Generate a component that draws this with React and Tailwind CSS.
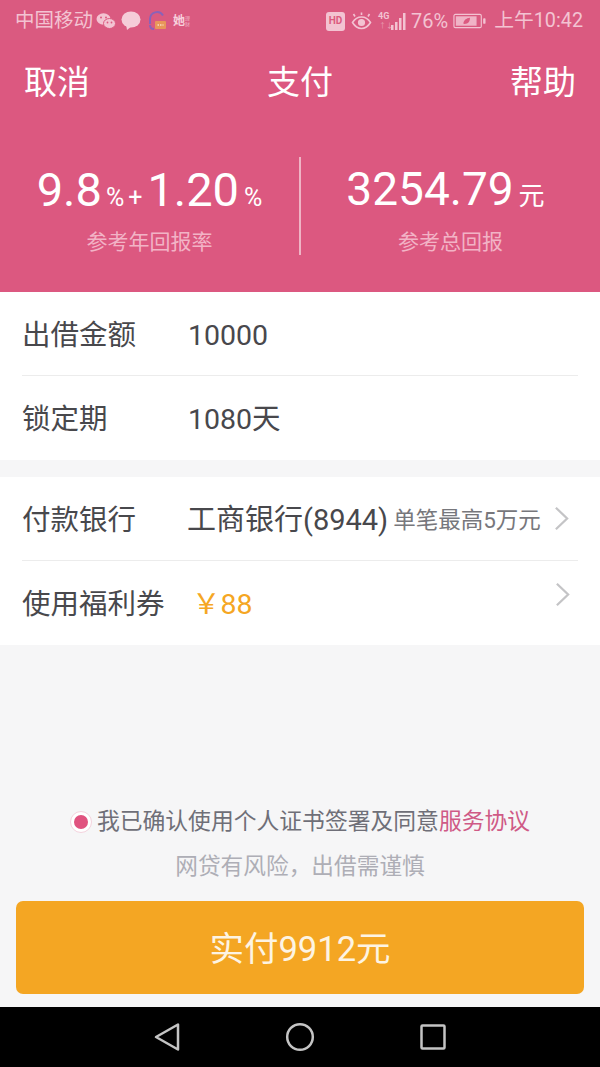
import React from "react";

const FONT = "font-['Roboto','Noto_Sans_CJK_SC',sans-serif]";

// Small status bar glyphs
const WechatIcon = () => (
  <svg width="20" height="18" viewBox="0 0 20 18" fill="#f3c3d2">
    <ellipse cx="7.5" cy="7" rx="7" ry="5.8" />
    <ellipse cx="13.5" cy="11.5" rx="6" ry="5" stroke="#dc5a80" strokeWidth="1" />
    <circle cx="5" cy="5.5" r="1" fill="#dc5a80" />
    <circle cx="10" cy="5.5" r="1" fill="#dc5a80" />
    <circle cx="11.5" cy="10.5" r="0.9" fill="#dc5a80" />
    <circle cx="15.5" cy="10.5" r="0.9" fill="#dc5a80" />
  </svg>
);

const ChatIcon = () => (
  <svg width="20" height="20" viewBox="0 0 20 20" fill="#f5ccd8">
    <ellipse cx="10" cy="8.5" rx="9.5" ry="8" />
    <path d="M5 13l1 6 5-4z" />
  </svg>
);

const HeadsetIcon = () => (
  <svg width="20" height="22" viewBox="0 0 20 22" fill="none">
    <path d="M2 14V9a7 7 0 0 1 13-3.500" stroke="#8a62b8" strokeWidth="2" />
    <path d="M2 15c0 3 1 4 4 4" stroke="#8a62b8" strokeWidth="2" />
    <rect x="7" y="11" width="11" height="8" rx="1" fill="#e8965a" />
    <path d="M9.500 15h6" stroke="#f9dcc0" strokeWidth="1.500" strokeDasharray="1.500 1" />
  </svg>
);

const HdIcon = () => (
  <span className="flex h-[19px] w-[19px] items-center justify-center rounded-[3px] bg-[#f3c3d2] text-[10px] font-bold leading-none text-[#dc5a80]">
    HD
  </span>
);

const EyeIcon = () => (
  <svg width="21" height="19" viewBox="0 0 21 19" fill="none" stroke="#f3c3d2" strokeWidth="1.600">
    <path d="M1.500 10.500C4 6.500 7 5 10.500 5s6.500 1.500 9 5.500c-2.500 4-5.500 6-9 6s-6.500-2-9-6z" />
    <circle cx="10.500" cy="10.500" r="2.800" fill="#f3c3d2" />
    <path d="M4 4.500L2.500 2M10.500 3V.5M17 4.500L18.500 2" />
  </svg>
);

const SignalIcon = () => (
  <span className="relative block h-[20px] w-[30px]">
    <span className="absolute left-0 top-0 text-[9px] font-bold leading-[10px] text-[#f3c3d2]">4G</span>
    <span className="absolute left-[1px] top-[11px] text-[7px] leading-[8px] text-[#eaa0b6]">↑↓</span>
    <svg className="absolute left-0 top-0" width="30" height="20" viewBox="0 0 30 20" fill="#f3c3d2">
      <rect x="13" y="14" width="2.500" height="5" />
      <rect x="17" y="11" width="2.500" height="8" />
      <rect x="21" y="7" width="2.500" height="12" />
      <rect x="25" y="2" width="2.500" height="17" />
    </svg>
  </span>
);

const BatteryIcon = () => (
  <svg width="33" height="18" viewBox="0 0 35 18" fill="none">
    <rect x="1" y="2" width="29" height="14" rx="1.500" stroke="#f3c3d2" strokeWidth="1.200" />
    <rect x="3" y="4" width="22" height="10" fill="#f0b3c6" />
    <path d="M11 12c0-4 3-6 7-6.500 0 4-2 7-7 6.500z" fill="#dc5a80" />
    <rect x="32" y="6" width="2.500" height="6" rx="1" fill="#f3c3d2" />
  </svg>
);

const Chevron = () => (
  <svg width="15" height="25" viewBox="0 0 16 26" fill="none" stroke="#c4c4c6" strokeWidth="2.400">
    <path d="M2 1.500L14 13 2 24.500" />
  </svg>
);

const Row = ({ label, last, children }) => (
  <div className="pl-[22px]">
    <div className={`flex h-[84px] items-center pt-[5px] ${last ? "" : "border-b border-[#ececec] mr-[22px]"}`}>
      <span className="w-[166px] text-[28.5px] text-[#48484c]">{label}</span>
      {children}
    </div>
  </div>
);

export default function App() {
  return (
    <div className={`${FONT} flex h-[1067px] w-[600px] flex-col overflow-hidden bg-[#f6f6f7]`}>
      {/* pink header */}
      <div className="flex h-[292px] flex-col bg-[#dc5880]">
        <div className="flex h-[40px] items-center justify-between bg-[#da5a80] pl-[15px] pr-[17px] pt-[2px] text-[#f3c3d2]">
          <div className="flex items-center">
            <span className="text-[19.500px] leading-none">中国移动</span>
            <span className="ml-[3px]"><WechatIcon /></span>
            <span className="ml-[5px]"><ChatIcon /></span>
            <span className="ml-[7px]"><HeadsetIcon /></span>
            <span className="ml-[5px] text-[12px] font-bold leading-none text-[#f7d0dc]">她</span>
            <span className="w-[6px] text-[5px] leading-[6px] text-[#f0b3c6]">理财</span>
          </div>
          <div className="flex items-center">
            <HdIcon />
            <span className="ml-[6px]"><EyeIcon /></span>
            <span className="ml-[6px]"><SignalIcon /></span>
            <span className="ml-[3px] text-[20px] leading-none">76%</span>
            <span className="ml-[5px]"><BatteryIcon /></span>
            <span className="ml-[8px] text-[19.800px] leading-none">上午10:42</span>
          </div>
        </div>

        <div className="flex h-[84px] items-center justify-between pl-[24px] pr-[24px] text-[33px] leading-none text-white">
          <span>取消</span>
          <span>支付</span>
          <span>帮助</span>
        </div>

        <div className="mt-[33px] flex">
          <div className="flex h-[100px] w-[299px] flex-col items-center text-white">
            <div className="flex h-[64px] items-baseline pt-[9px] leading-none">
              <span className="text-[47px]">9.8</span>
              <span className="ml-[4px] text-[25px]">%</span>
              <span className="ml-[4px] text-[25px]">+</span>
              <span className="ml-[5px] text-[47px]">1.20</span>
              <span className="ml-[5px] text-[25px]">%</span>
            </div>
            <span className="mt-[11px] text-[21px] leading-none text-[#f2b3c6]">参考年回报率</span>
          </div>
          <div className="h-[98px] w-[2px] bg-[#efb4c5]" />
          <div className="flex h-[100px] flex-1 flex-col items-center text-white">
            <div className="mr-[10px] flex h-[64px] items-baseline pt-[9px] leading-none">
              <span className="text-[46px]">3254.79</span>
              <span className="ml-[5px] text-[26px]">元</span>
            </div>
            <span className="mt-[11px] text-[21px] leading-none text-[#f2b3c6]">参考总回报</span>
          </div>
        </div>
      </div>

      {/* amount */}
      <div className="bg-white">
        <Row label="出借金额">
          <span className="text-[28.5px] text-[#48484c]">10000</span>
        </Row>
        <Row label="锁定期" last>
          <span className="text-[28.5px] text-[#48484c]">1080天</span>
        </Row>
      </div>

      {/* bank + coupon */}
      <div className="mt-[17px] bg-white">
        <Row label="付款银行">
          <span className="ml-[-1px] whitespace-nowrap text-[29px] text-[#48484c]">工商银行(8944)</span>
          <span className="ml-[5px] whitespace-nowrap text-[22.500px] text-[#77777c]">单笔最高5万元</span>
          <span className="ml-[13px] mt-[-6px] shrink-0"><Chevron /></span>
        </Row>
        <Row label="使用福利券" last>
          <span className="ml-[4px] text-[28.5px] text-[#f5a623]">￥88</span>
          <span className="ml-auto mr-[30px] mt-[-22px]"><Chevron /></span>
        </Row>
      </div>

      {/* agreement */}
      <div className="mt-[162px] flex items-center justify-center">
        <span className="flex h-[22px] w-[22px] items-center justify-center rounded-full border border-[#f4d3de] bg-white">
          <span className="h-[14px] w-[14px] rounded-full bg-[#e0527f]" />
        </span>
        <span className="ml-[5px] text-[22.800px] leading-[30px] text-[#6f6f78]">
          我已确认使用个人证书签署及同意<span className="text-[#cf5a86]">服务协议</span>
        </span>
      </div>
      <div className="mt-[15px] text-center text-[22.700px] leading-[30px] text-[#aeaeb6]">网贷有风险，出借需谨慎</div>

      <div className="mx-[16px] mt-[19px] flex h-[93px] items-center justify-center rounded-[7px] bg-[#f4a623] pt-[4px] text-[34.500px] text-[#fdf4e3]">
        实付9912元
      </div>

      {/* android nav bar */}
      <div className="mt-[13px] flex h-[60px] items-center justify-center gap-[105px] bg-black">
        <svg width="26" height="30" viewBox="0 0 26 30" fill="none" stroke="#c4c4c4" strokeWidth="2.500" strokeLinejoin="round">
          <path d="M24 2.500v25L2 15z" />
        </svg>
        <svg width="30" height="30" viewBox="0 0 30 30" fill="none" stroke="#c4c4c4" strokeWidth="2.500">
          <circle cx="15" cy="15" r="12.800" />
        </svg>
        <svg width="26" height="26" viewBox="0 0 26 26" fill="none" stroke="#c4c4c4" strokeWidth="2.500" strokeLinejoin="round">
          <rect x="1.500" y="1.500" width="23" height="23" rx="1" />
        </svg>
      </div>
    </div>
  );
}
